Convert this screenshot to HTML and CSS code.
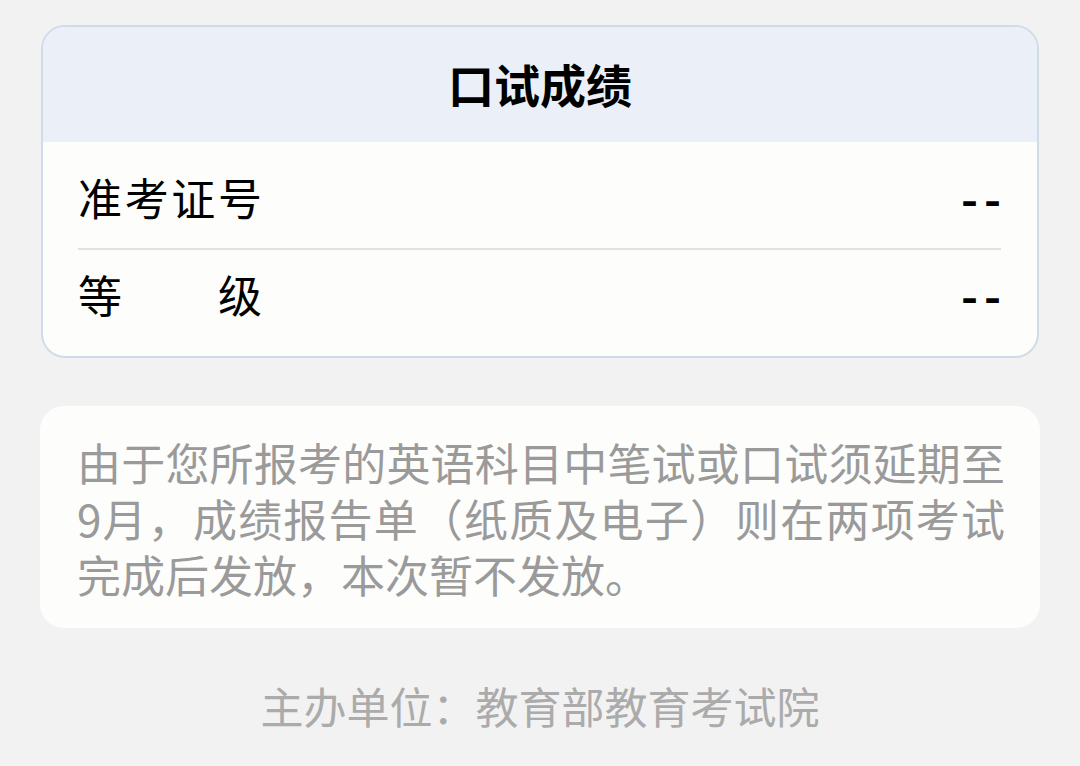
FILE: index.html
```html
<!DOCTYPE html>
<html lang="zh-CN">
<head>
    <meta charset="UTF-8">
    <meta name="viewport" content="width=device-width, initial-scale=1.0">
    <title>口试成绩</title>
    <link rel="stylesheet" href="styles.css">
</head>
<body>
    <div id="page">
        <div class="score-card">
            <div class="score-header">口试成绩</div>
            <div class="score-body">
                <div class="score-row">
                    <span class="row-label">准考证号</span>
                    <span class="row-value">--</span>
                </div>
                <div class="score-row">
                    <span class="row-label">等级</span>
                    <span class="row-value">--</span>
                </div>
            </div>
        </div>
        <div class="notice-card">
            由于您所报考的英语科目中笔试或口试须延期至9月，成绩报告单（纸质及电子）则在两项考试完成后发放，本次暂不发放。
        </div>
        <div class="footer">主办单位：教育部教育考试院</div>
    </div>
</body>
</html>
```

FILE: styles.css
```css
body {
    font-family: "Noto Sans CJK SC", "Noto Sans", sans-serif;
    background-color: #f2f2f2;
    margin: 0;
    padding: 0;
}
#page {
    padding: 25px 40px 0;
}
.score-card {
    margin: 0 1px;
    background-color: #fdfdfb;
    border: 2px solid #cfdce8;
    border-radius: 24px;
    overflow: hidden;
}
.score-header {
    height: 115px;
    line-height: 112px;
    background-color: #ebf0f8;
    text-align: center;
    font-size: 46px;
    font-weight: bold;
    color: #000;
}
.score-body {
    padding: 0 36px 0 35px;
}
.score-row {
    display: flex;
    justify-content: space-between;
    align-items: center;
    height: 106px;
    padding-top: 4px;
    box-sizing: border-box;
    font-size: 44px;
    color: #000;
}
.score-row + .score-row {
    border-top: 2px solid #e2e2e2;
    height: 108px;
    padding-top: 0;
    padding-bottom: 18px;
}
.row-label {
    width: 184px;
    text-align: justify;
    text-align-last: justify;
}
.row-value {
    font-size: 46px;
    font-weight: bold;
    letter-spacing: 6px;
    margin-right: -6px;
}
.notice-card {
    margin-top: 48px;
    padding: 28px 35px 26px 37px;
    background-color: #fdfdfb;
    border-radius: 24px;
    font-size: 44px;
    line-height: 56px;
    color: #9a9a9a;
    text-align: justify;
}
.footer {
    margin-top: 46px;
    text-align: center;
    font-size: 43px;
    color: #ababab;
}
```
